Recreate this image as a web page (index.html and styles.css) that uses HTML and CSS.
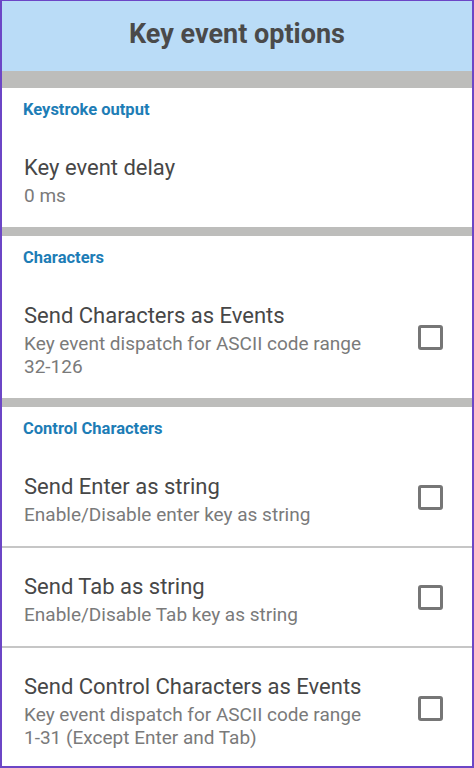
FILE: index.html
```html
<!DOCTYPE html>
<html lang="en">
<head>
  <meta charset="UTF-8">
  <meta name="viewport" content="width=device-width, initial-scale=1.0">
  <title>Key event options</title>
  <link rel="stylesheet" href="styles.css">
</head>
<body>
  <div class="frame">
    <header class="appbar">Key event options</header>
    <div class="shade"></div>

    <section class="category">
      <h2>Keystroke output</h2>
      <div class="pref">
        <div class="pref-text">
          <div class="pref-title">Key event delay</div>
          <div class="pref-summary">0 ms</div>
        </div>
      </div>
    </section>

    <section class="category">
      <h2>Characters</h2>
      <div class="pref">
        <div class="pref-text">
          <div class="pref-title">Send Characters as Events</div>
          <div class="pref-summary">Key event dispatch for ASCII code range <span class="nobr">32-126</span></div>
        </div>
        <input type="checkbox" class="check">
      </div>
    </section>

    <section class="category">
      <h2>Control Characters</h2>
      <div class="pref">
        <div class="pref-text">
          <div class="pref-title">Send Enter as string</div>
          <div class="pref-summary">Enable/Disable enter key as string</div>
        </div>
        <input type="checkbox" class="check">
      </div>
      <div class="pref">
        <div class="pref-text">
          <div class="pref-title">Send Tab as string</div>
          <div class="pref-summary">Enable/Disable Tab key as string</div>
        </div>
        <input type="checkbox" class="check">
      </div>
      <div class="pref">
        <div class="pref-text">
          <div class="pref-title">Send Control Characters as Events</div>
          <div class="pref-summary">Key event dispatch for ASCII code range <span class="nobr">1-31</span> (Except Enter and Tab)</div>
        </div>
        <input type="checkbox" class="check">
      </div>
    </section>
  </div>
</body>
</html>
```

FILE: styles.css
```css
body {
  margin: 0;
  padding: 0;
  font-family: Roboto, "Liberation Sans", sans-serif;
  background-color: #ffffff;
}

.frame {
  height: 768px;
  box-sizing: border-box;
  border: 2px solid #6c46c6;
  border-top-width: 1px;
  overflow: hidden;
  background-color: #bdbdbb;
}

.appbar {
  height: 70px;
  box-sizing: border-box;
  padding-bottom: 4px;
  line-height: 66px;
  text-align: center;
  font-size: 27px;
  font-weight: bold;
  color: #4a4a4a;
  background-color: #badcf7;
}

.shade {
  height: 17px;
  background-color: #bdbdbb;
}

.category {
  background-color: #ffffff;
  padding-top: 12px;
  margin-bottom: 9px;
}

.category h2 {
  margin: 0 0 9px;
  padding-left: 21px;
  font-size: 16.5px;
  line-height: 20px;
  font-weight: bold;
  color: #1d7db6;
}

.pref {
  display: flex;
  align-items: center;
  padding-left: 22px;
}

.pref + .pref {
  border-top: 2px solid #c6c6c6;
}

.pref-text {
  flex: 1;
  padding: 25px 0 20px;
}

.pref-title {
  font-size: 22px;
  line-height: 28px;
  color: #474747;
}

.pref-summary {
  margin-top: 2px;
  font-size: 19px;
  line-height: 23px;
  color: #7a7a7a;
}

.nobr {
  white-space: nowrap;
}

.check {
  appearance: none;
  width: 25px;
  height: 25px;
  box-sizing: border-box;
  margin: 0 29px 0 18px;
  border: 3px solid #767676;
  border-radius: 3px;
  background-color: #ffffff;
  flex-shrink: 0;
}
```
